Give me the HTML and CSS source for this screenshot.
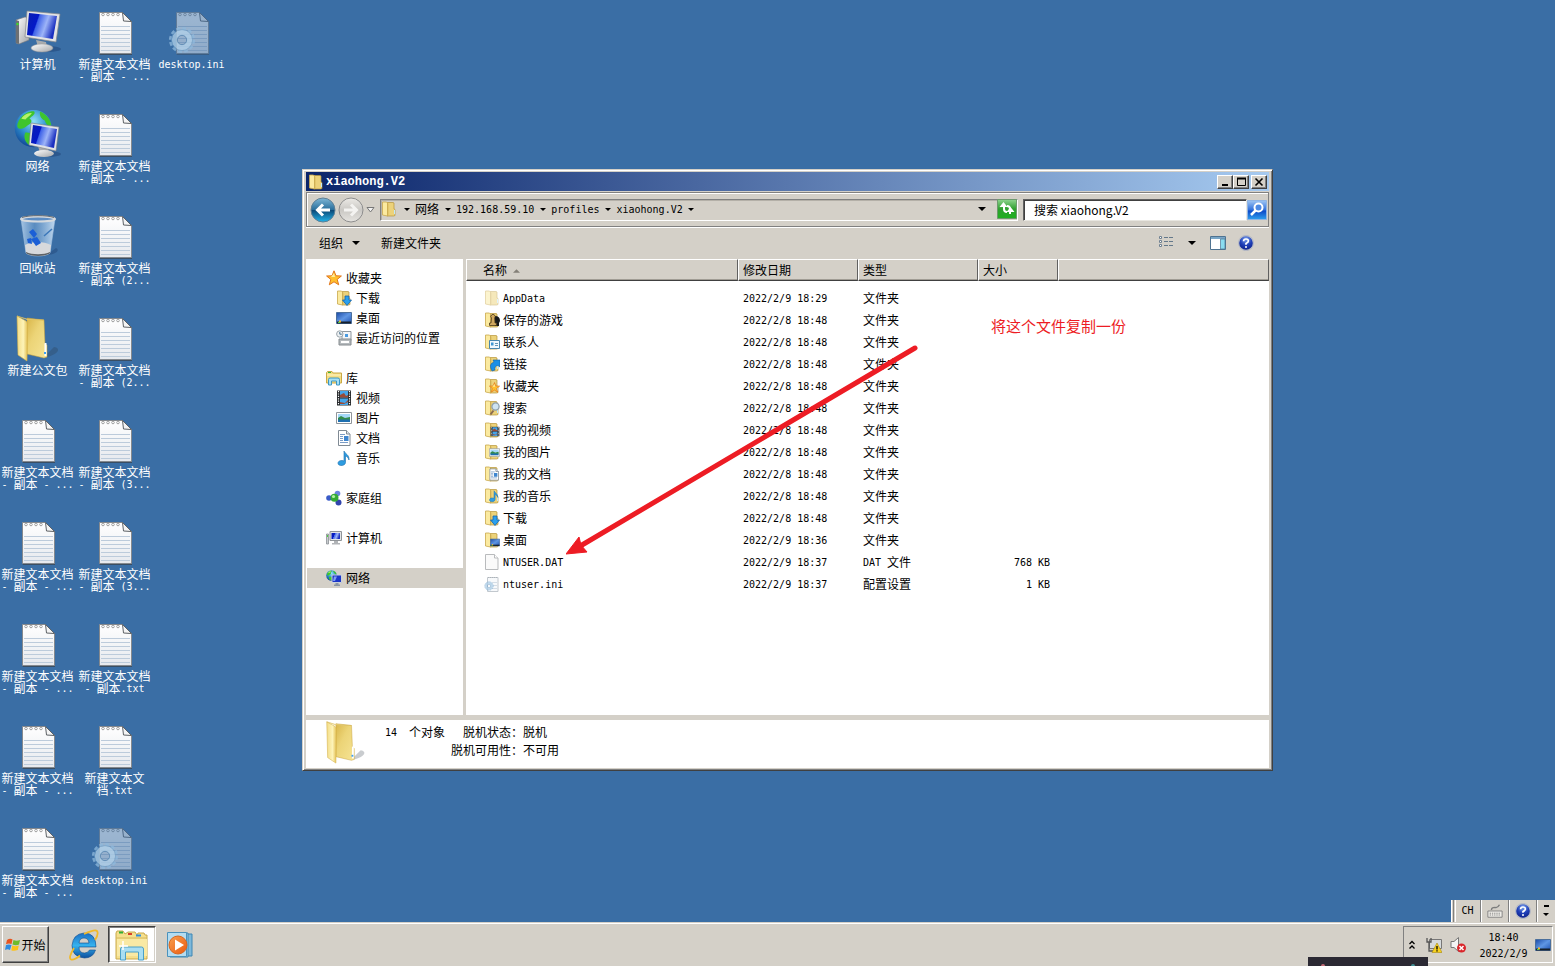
FILE: index.html
```
<!DOCTYPE html>
<html lang="zh-CN">
<head>
<meta charset="utf-8">
<title>xiaohong.V2</title>
<link rel="stylesheet" href="styles.css">
</head>
<body>
<svg class="defs" width="0" height="0" aria-hidden="true">
  <defs>
    <linearGradient id="gScreen" x1="0" y1="0" x2="1" y2="0.3"><stop offset="0" stop-color="#0a1fb0"/><stop offset=".38" stop-color="#0418c8"/><stop offset=".42" stop-color="#3f63e8"/><stop offset=".7" stop-color="#9db4f8"/><stop offset="1" stop-color="#1a2fc0"/></linearGradient>
    <linearGradient id="gMetal" x1="0" y1="0" x2="1" y2="1"><stop offset="0" stop-color="#ffffff"/><stop offset="1" stop-color="#a4a6a8"/></linearGradient>
    <linearGradient id="gPaper" x1="0" y1="0" x2="0" y2="1"><stop offset="0" stop-color="#ffffff"/><stop offset="1" stop-color="#e6e9ee"/></linearGradient>
    <linearGradient id="gFold" x1="0" y1="0" x2="1" y2="0"><stop offset="0" stop-color="#f3dc86"/><stop offset=".6" stop-color="#fdf3b8"/><stop offset="1" stop-color="#e4c154"/></linearGradient>
    <linearGradient id="gFoldBack" x1="0" y1="0" x2="1" y2="1"><stop offset="0" stop-color="#d9b64a"/><stop offset=".4" stop-color="#ecd477"/><stop offset="1" stop-color="#f6e495"/></linearGradient>
    <radialGradient id="gGlobe" cx=".5" cy=".3" r=".75"><stop offset="0" stop-color="#8fe0f5"/><stop offset=".5" stop-color="#2f8fd0"/><stop offset="1" stop-color="#0b3c8c"/></radialGradient>
    <linearGradient id="gBin" x1="0" y1="0" x2="1" y2="0"><stop offset="0" stop-color="#b9d4ee" stop-opacity=".85"/><stop offset=".4" stop-color="#6fa0d2" stop-opacity=".6"/><stop offset="1" stop-color="#cfe4f7" stop-opacity=".9"/></linearGradient>
    <linearGradient id="gBack" x1="0" y1="0" x2="0" y2="1"><stop offset="0" stop-color="#7fb7d6"/><stop offset=".48" stop-color="#2a6f9c"/><stop offset=".52" stop-color="#0c4a78"/><stop offset="1" stop-color="#22b4ea"/></linearGradient>
    <linearGradient id="gFwd" x1="0" y1="0" x2="0" y2="1"><stop offset="0" stop-color="#eceae6"/><stop offset=".5" stop-color="#cac8c4"/><stop offset="1" stop-color="#e6e4e0"/></linearGradient>
    <linearGradient id="gGreen" x1="0" y1="0" x2="0" y2="1"><stop offset="0" stop-color="#8fd48f"/><stop offset=".5" stop-color="#2fa02f"/><stop offset="1" stop-color="#1fb01f"/></linearGradient>
    <linearGradient id="gFind" x1="0" y1="0" x2="0" y2="1"><stop offset="0" stop-color="#9fc6f4"/><stop offset=".5" stop-color="#2f6fdc"/><stop offset=".55" stop-color="#0d49c8"/><stop offset="1" stop-color="#2fa0ee"/></linearGradient>
    <radialGradient id="gHelp" cx=".5" cy=".25" r=".8"><stop offset="0" stop-color="#7fa4ee"/><stop offset=".5" stop-color="#1f3fb8"/><stop offset="1" stop-color="#0a1a80"/></radialGradient>
    <linearGradient id="gDesk" x1="0" y1="0" x2="1" y2="1"><stop offset="0" stop-color="#1b4aa6"/><stop offset=".5" stop-color="#5f96e4"/><stop offset="1" stop-color="#1d50b0"/></linearGradient>
    <linearGradient id="gIe" x1="0" y1="0" x2="0" y2="1"><stop offset="0" stop-color="#1c6fc4"/><stop offset=".5" stop-color="#35b2ee"/><stop offset="1" stop-color="#0d4f9e"/></linearGradient>
    <linearGradient id="gOrange" x1="0" y1="0" x2="1" y2="1"><stop offset="0" stop-color="#f8a050"/><stop offset="1" stop-color="#ea5a10"/></linearGradient>

    <symbol id="computer" viewBox="0 0 48 48">
      <ellipse cx="34" cy="41" rx="13" ry="3" fill="#1d3f70" opacity=".45"/>
      <path d="M2 12l9-3 4 1v22l-10 4-3-1z" fill="url(#gMetal)" stroke="#77797c" stroke-width=".6"/><path d="M2 12l3 1v23l-3-1z" fill="#6d7073"/><circle cx="3.5" cy="16" r="1.2" fill="#3be02a"/>
      <path d="M22 32l10 2 1 5h-9z" fill="#a9abad"/><ellipse cx="28" cy="40" rx="11" ry="4" fill="url(#gMetal)" stroke="#999" stroke-width=".5"/>
      <path d="M13 3l33 3-4 28-31-5z" fill="#e3e4e5" stroke="#85878a" stroke-width=".7"/><path d="M15 5l28 3-4 23-26-4z" fill="url(#gScreen)"/>
    </symbol>
    <symbol id="globe" viewBox="0 0 48 48">
      <circle cx="24" cy="24" r="23" fill="url(#gGlobe)"/>
      <path d="M6 14C12 4 22 2 25 3c2 4-4 6-6 9 4 1 3 6-2 8-4 3-6 5-11 4-3-2-2-6 0-10zM14 29c6-1 10 3 13 6 0 5-3 9-7 10-6-3-9-10-6-16zM32 3c8 3 13 10 14 17-4 2-7-2-8-6-4-1-7-6-6-11z" fill="#3fc52d"/>
      <path d="M9 12c4-6 9-7 13-7-2 4-6 5-8 8z" fill="#b8f26a"/>
    </symbol>
    <symbol id="network" viewBox="0 0 48 48">
      <ellipse cx="34" cy="44" rx="13" ry="3" fill="#1d3f70" opacity=".45"/>
      <use href="#globe" x="0" y="-1" width="39" height="39"/>
      <path d="M24 36l10 2 1 5h-9z" fill="#a9abad"/><ellipse cx="30" cy="43.500" rx="10" ry="3.500" fill="url(#gMetal)"/>
      <path d="M17 13l28 4-3 24-27-6z" fill="#dfe2e6" stroke="#777b80" stroke-width=".6"/><path d="M19 15l24 4-3 19-23-5z" fill="url(#gScreen)"/>
    </symbol>
    <symbol id="bin" viewBox="0 0 48 48">
      <path d="M34 42l8-6c4 2 1 6-8 7z" fill="#1d3f70" opacity=".4"/>
      <path d="M7 7l5 34c4 4 20 4 24 0l5-34z" fill="url(#gBin)" stroke="#9fc0df" stroke-width=".6"/>
      <path d="M11 33c6-4 19-4 26 0l-1 8c-4 4-20 4-24 0z" fill="#d7d9dc"/><path d="M12 40c6 3 18 3 24 0v1c-4 4-20 4-24 0z" fill="#5d6267"/>
      <path d="M15 20l4-3 4 5-3 4zM17 27l6-2 4 6-5 3zM13 27l4-1 1 6-4-1z" fill="#1b5fd6"/><path d="M30 24l8-7" stroke="#3b77ba" stroke-width="1.500"/>
      <ellipse cx="24" cy="7" rx="17" ry="2.500" fill="#5c8dc4" stroke="#d5d9dd" stroke-width="2"/><path d="M8 5.500c7-2.500 25-2.500 32 0" fill="none" stroke="#6a6e72"/>
    </symbol>
    <symbol id="folder" viewBox="0 0 48 48">
      <path d="M32 41l8-8c7 1 5 7-7 10z" fill="#28323f" opacity=".25"/>
      <path d="M13 4l17 2 1 24 2 1v12l-3 1-17-4z" fill="url(#gFoldBack)" stroke="#c59f38" stroke-width=".5"/>
      <path d="M3 2l9 5c1 1 1.500 2 1.500 4L13 47 4 41z" fill="url(#gFold)" stroke="#d3b14a" stroke-width=".6"/>
      <path d="M3 2l10 3 17 1-17-.5z" fill="#fff6c8" stroke="#d9bb5a" stroke-width=".5"/><path d="M30.500 29h2v13h-2z" fill="#fff"/><path d="M30 38h2v2h-2z" fill="#3aa0f5"/>
    </symbol>
    <symbol id="note" viewBox="0 0 48 48">
      <path d="M8 45h33v2H9z" fill="#3a4654" opacity=".8"/><path d="M8.500 4.500h23l9 9V45.500h-32z" fill="url(#gPaper)" stroke="#85898e"/>
      <path d="M10 18.500h29M10 22.500h29M10 26.500h29M10 30.500h29M10 34.500h29M10 38.500h29M10 42.500h29" stroke="#bccbdb" stroke-width="1"/>
      <g fill="#fff" stroke="#8b8b8b" stroke-width=".8"><circle cx="12" cy="6.500" r="1.300"/><circle cx="17" cy="6.500" r="1.300"/><circle cx="22" cy="6.500" r="1.300"/><circle cx="27" cy="6.500" r="1.300"/></g>
      <path d="M31.500 4.500l1 8.500 8 .5z" fill="#f4f4f4" stroke="#5e6266"/>
    </symbol>
    <symbol id="gear" viewBox="0 0 30 30">
      <circle cx="15" cy="15" r="12.500" fill="none" stroke="#8fb9dc" stroke-width="3" stroke-dasharray="4 2.540"/><circle cx="15" cy="15" r="8" fill="none" stroke="#b2d2ea" stroke-width="6"/><circle cx="15" cy="15" r="11.300" fill="none" stroke="#6f9fc8" stroke-width=".7"/><circle cx="15" cy="15" r="5" fill="none" stroke="#4c7fac"/>
    </symbol>
    <symbol id="ini" viewBox="0 0 48 48"><use href="#note" width="48" height="48" opacity=".5"/><use href="#gear" x="0" y="17" width="28" height="30" opacity=".75"/></symbol>

    <symbol id="f16" viewBox="0 0 16 16"><path d="M6 1.500h6l1 .5v6l1 .5v6l-1.500 .5H6z" fill="#ecd27a" stroke="#b8953a" stroke-width=".7"/><path d="M6.500 2.500v12" stroke="#c9a545" stroke-width="1.500"/><path d="M1.500 1h4l1 1v13l-5-1z" fill="#fbeaa0" stroke="#c9a84c" stroke-width=".8"/><path d="M13 9h1v4h-1z" fill="#bfe8fa"/></symbol>
    <symbol id="dl" viewBox="0 0 16 16"><path d="M9 6h4v4h2.500L11 15.500 6.500 10H9z" fill="#2aa0ee" stroke="#1763a8" stroke-width=".8"/></symbol>
    <symbol id="star" viewBox="0 0 16 16"><path d="M8 .8l2 5 5.400.2-4.200 3.400 1.500 5.400L8 11.800l-4.700 3 1.500-5.400L.6 6 6 5.800z" fill="#ffc02e" stroke="#e2761b" stroke-width="1"/><path d="M8 3l1 4-4 0z" fill="#ffeb9a"/></symbol>
    <symbol id="desk" viewBox="0 0 16 16"><path d="M.5 2.500h15v11H.5z" fill="url(#gDesk)" stroke="#4b6f9c"/><path d="M1 11.500h14v2H1z" fill="#17202c"/><path d="M3 10.500h2v2H3z" fill="#f7b52b"/><path d="M2 12h2v1H2z" fill="#4fd04a"/></symbol>
    <symbol id="recent" viewBox="0 0 16 16"><path d="M6 1.500h9v9H6z" fill="#f3f6f8" stroke="#8e979e"/><path d="M9 4h3v3H9z" fill="#4b9be0"/><circle cx="3.800" cy="4" r="3.200" fill="#eef2f4" stroke="#9aa3a9"/><path d="M3.800 2v2.200h2" fill="none" stroke="#49708a"/><path d="M3 9h12v6H3z" fill="#b5babd" stroke="#868c90"/><path d="M5 12h8" stroke="#fff" stroke-width="2"/></symbol>
    <symbol id="lib" viewBox="0 0 16 16"><path d="M.5 2.500l1-1H6l1 1.500h8.500v10H.5z" fill="#f4dd83" stroke="#c9a846"/><path d="M2 2.500h3" stroke="#36b53a"/><path d="M1 5h14" stroke="#fff6c6"/><path d="M2.500 15V9.500q0-1.500 1.500-1.500h8q1.500 0 1.500 1.500V15h-3v-4h-5v4z" fill="#a6e0f5" stroke="#3c96c4"/></symbol>
    <symbol id="film" viewBox="0 0 16 16"><path d="M1 .5h14v15H1z" fill="#25282b"/><path d="M4 1h8v6.500H4zM4 8.500h8V15H4z" fill="#45a5ea"/><path d="M4 5l4-2 2 3 2-1v2.500H4zM4 12l5 1 3-3v2l-4 2H4z" fill="#9b4a35"/><path d="M2.500 1v14M13.500 1v14" stroke="#fff" stroke-width="1.200" stroke-dasharray="1.200 1.200"/></symbol>
    <symbol id="pic" viewBox="0 0 16 16"><path d="M.5 2.500h15v11H.5z" fill="#fff" stroke="#8f959a"/><path d="M2 4h12v4H2z" fill="#a5d8f8"/><path d="M2 8l3-2 4 2 5-1v3H2z" fill="#338b4b"/><path d="M2 9.500h12V12H2z" fill="#1e6fb0"/></symbol>
    <symbol id="doc" viewBox="0 0 16 16"><path d="M2.500.5h8l3.500 3.500v11.500H2.500z" fill="#fff" stroke="#808a94"/><path d="M10.500.5V4H14" fill="#e2e8ee" stroke="#808a94"/><path d="M4 4.500h5M4 6.500h3M4 8.500h3M4 10.500h3M4 12.500h8" stroke="#7a9cc6"/><path d="M8 6h4.500v5H8z" fill="#3f86cf"/></symbol>
    <symbol id="music" viewBox="0 0 16 16"><path d="M8 1c1 3 5.500 3.500 5 9-.8-2.500-2-3.500-3.500-4v6.500c0 3.800-7.500 4-7.500.8 0-2.700 3.500-3.300 6-2.300z" fill="#2e9ce0" stroke="#1d6fae" stroke-width=".6"/></symbol>
    <symbol id="home" viewBox="0 0 16 16"><path d="M3 8h7l1-5m-1 5l2 5" stroke="#9badc4" stroke-width="2" fill="none"/><circle cx="3" cy="8" r="2.800" fill="#3a5bc8"/><circle cx="11.500" cy="3.500" r="2.800" fill="#6c84e0"/><circle cx="12.500" cy="12.500" r="3" fill="#3144ad"/><circle cx="8.500" cy="7.800" r="4" fill="#35ab35"/><circle cx="7.500" cy="6.500" r="1.600" fill="#b5f2a4"/></symbol>
    <symbol id="pc" viewBox="0 0 16 16"><path d="M.5 4h2v10h-2z" fill="#c8cccf" stroke="#8c9195" stroke-width=".8"/><path d="M1 5h1v2H1z" fill="#4cd13d"/><path d="M4 1.500h11.500v9H4z" fill="#e2e4e6" stroke="#909498"/><path d="M5.500 3H14v6H5.500z" fill="url(#gScreen)"/><path d="M8 11h4v2h2v1.500H6V13h2z" fill="#b1b4b7"/></symbol>
    <symbol id="net" viewBox="0 0 16 16"><use href="#globe" width="11" height="11"/><path d="M6 5h9.500v7.500H6z" fill="#1b35c8" stroke="#c9d1da"/><path d="M8 6.500h3L9 11H7z" fill="#7f9cf5"/><path d="M9.500 13h3v1.500h1.500V16H8v-1.500h1.500z" fill="#8b97a5"/></symbol>
    <symbol id="page" viewBox="0 0 16 16"><path d="M1.500.5h9l3.500 3.500v11.500H1.500z" fill="#fafafa" stroke="#b9bbbd"/><path d="M10.500.5V4H14" fill="#fff" stroke="#b9bbbd"/></symbol>
    <symbol id="ini16" viewBox="0 0 16 16"><path d="M3.500 1.500H14v14H3.500z" fill="#f7f9fb" stroke="#c2c8ce"/><path d="M4 1.500h10" stroke="#adb3b8" stroke-dasharray="1 1"/><path d="M8 6.500h5M9 9.500h4M8 12.500h5" stroke="#d4dde6"/><use href="#gear" x="0" y="5" width="10" height="10" opacity=".8"/></symbol>
    <symbol id="chess" viewBox="0 0 16 16"><path d="M11 4q5 0 5 5l-1 2v3h-4z" fill="#16181a"/><path d="M7.500 3a2 2 0 1 1 3 3l.5 5h1.500v2.500h-7V11H7l.5-5a2 2 0 0 1 0-3z" fill="#d0a860" stroke="#4c3a1a" stroke-width=".8"/></symbol>
    <symbol id="card" viewBox="0 0 16 16"><path d="M5.500 6.500h10v8h-10z" fill="#f2f9fd" stroke="#4a87ad"/><path d="M7 8.500h2.500v3H7z" fill="#3f97d2"/><path d="M11 9.500h3M11 11.500h3" stroke="#6597b5"/></symbol>
    <symbol id="link" viewBox="0 0 16 16"><path d="M8 15q-4-7 2-9l-1-2h7v7l-2-1.500q-4 .5-3 4.500z" fill="#1b8fe6" stroke="#1262a6" stroke-width=".6"/></symbol>
    <symbol id="lens" viewBox="0 0 16 16"><path d="M6.500 14.500l3-4" stroke="#8a6c50" stroke-width="2"/><circle cx="11.500" cy="6.500" r="3.600" fill="#cfe4f2" stroke="#8ea0ae" stroke-width="1.300"/></symbol>
    <symbol id="help" viewBox="0 0 16 16"><circle cx="8" cy="8" r="7.400" fill="url(#gHelp)" stroke="#b8bcc6" stroke-width="1.200"/><path d="M5.600 6.200Q5.600 4 8 4t2.400 2.100Q10.400 7.500 8 8.500V9.800" fill="none" stroke="#fff" stroke-width="1.700"/><circle cx="8" cy="12" r="1" fill="#fff"/></symbol>
    <symbol id="tri" viewBox="0 0 8 4"><path d="M0 0h8L4 4z" fill="#000"/></symbol>
  </defs>
</svg>

<main class="desktop">
  <ul class="icons">
    <li><svg><use href="#computer"/></svg><span>计算机</span></li>
    <li><svg><use href="#network"/></svg><span>网络</span></li>
    <li><svg><use href="#bin"/></svg><span>回收站</span></li>
    <li><svg><use href="#folder"/></svg><span>新建公文包</span></li>
    <li><svg><use href="#note"/></svg><span>新建文本文档<br><i>- </i>副本<i> - ...</i></span></li>
    <li><svg><use href="#note"/></svg><span>新建文本文档<br><i>- </i>副本<i> - ...</i></span></li>
    <li><svg><use href="#note"/></svg><span>新建文本文档<br><i>- </i>副本<i> - ...</i></span></li>
    <li><svg><use href="#note"/></svg><span>新建文本文档<br><i>- </i>副本<i> - ...</i></span></li>
    <li><svg><use href="#note"/></svg><span>新建文本文档<br><i>- </i>副本<i> - ...</i></span></li>
    <li><svg><use href="#note"/></svg><span>新建文本文档<br><i>- </i>副本<i> - ...</i></span></li>
    <li><svg><use href="#note"/></svg><span>新建文本文档<br><i>- </i>副本<i> - ...</i></span></li>
    <li><svg><use href="#note"/></svg><span>新建文本文档<br><i>- </i>副本<i> (2...</i></span></li>
    <li><svg><use href="#note"/></svg><span>新建文本文档<br><i>- </i>副本<i> (2...</i></span></li>
    <li><svg><use href="#note"/></svg><span>新建文本文档<br><i>- </i>副本<i> (3...</i></span></li>
    <li><svg><use href="#note"/></svg><span>新建文本文档<br><i>- </i>副本<i> (3...</i></span></li>
    <li><svg><use href="#note"/></svg><span>新建文本文档<br><i>- </i>副本<i>.txt</i></span></li>
    <li><svg><use href="#note"/></svg><span>新建文本文<br>档<i>.txt</i></span></li>
    <li><svg><use href="#ini"/></svg><span><i>desktop.ini</i></span></li>
    <li><svg><use href="#ini"/></svg><span><i>desktop.ini</i></span></li>
  </ul>

  <section class="window" aria-label="xiaohong.V2">
    <header class="titlebar">
      <svg class="ic"><use href="#f16"/></svg>
      <h1>xiaohong.V2</h1>
      <div class="winbtns">
        <button aria-label="最小化"><svg viewBox="0 0 12 10"><path d="M3 8h6" stroke="#000" stroke-width="2"/></svg></button>
        <button aria-label="最大化"><svg viewBox="0 0 12 10"><path d="M2.500 1.500h8v7h-8z" fill="none" stroke="#000"/><path d="M2 1.500h9" stroke="#000" stroke-width="2"/></svg></button>
        <button aria-label="关闭" class="close"><svg viewBox="0 0 12 10"><path d="M2.500 1.500l7 7m0-7l-7 7" stroke="#000" stroke-width="1.600"/></svg></button>
      </div>
    </header>

    <nav class="navbar">
      <div class="travel">
        <button aria-label="后退"><svg viewBox="0 0 26 26"><circle cx="13" cy="13" r="12" fill="url(#gBack)" stroke="#5f7f94"/><path d="M20 13H8m5-5.500L7.500 13l5.500 5.500" fill="none" stroke="#fff" stroke-width="3"/></svg></button>
        <button aria-label="前进"><svg viewBox="0 0 26 26"><circle cx="13" cy="13" r="12" fill="url(#gFwd)" stroke="#8e8e8e"/><path d="M6 13h12m-5-5.500l5.500 5.500-5.500 5.500" fill="none" stroke="#f4f3f1" stroke-width="3"/></svg></button>
        <button class="recentbtn" aria-label="最近的页面"><svg viewBox="0 0 9 6"><path d="M1 .5h7L4.500 5z" fill="#f2f2f2" stroke="#777"/></svg></button>
      </div>
      <div class="address">
        <svg class="ic"><use href="#f16"/></svg>
        <span class="sep first"><svg><use href="#tri"/></svg></span>
        <a href="#">网络</a><span class="sep"><svg><use href="#tri"/></svg></span>
        <a href="#"><i>192.168.59.10</i></a><span class="sep"><svg><use href="#tri"/></svg></span>
        <a href="#"><i>profiles</i></a><span class="sep"><svg><use href="#tri"/></svg></span>
        <a href="#"><i>xiaohong.V2</i></a><span class="sep"><svg><use href="#tri"/></svg></span>
        <button class="drop" aria-label="以前的位置"><svg class="tri"><use href="#tri"/></svg></button>
        <button class="refresh" aria-label="刷新"><svg viewBox="0 0 20 20"><path d="M.5.500h19v19H.5z" fill="url(#gGreen)" stroke="#6d9a6d"/><path d="M7 5v5q0 3 3 3M13 15v-5q0-3-3-3" fill="none" stroke="#fff" stroke-width="2"/><path d="M2.500 8L6.500 3l4 5zM9.500 13l4-5 4 5z" fill="#fff"/></svg></button>
      </div>
      <form class="search">
        <input type="text" aria-label="搜索" value="搜索 xiaohong.V2">
        <button type="button" aria-label="开始搜索"><svg viewBox="0 0 20 20"><path d="M.5.500h19v19H.5z" fill="url(#gFind)" stroke="#8fb4e4"/><circle cx="11.500" cy="7.500" r="4" fill="#4d8ae4" stroke="#fff" stroke-width="2"/><path d="M8.500 10.500L4 15" stroke="#fff" stroke-width="2.500"/></svg></button>
      </form>
    </nav>

    <div class="toolbar">
      <button>组织<svg class="tri"><use href="#tri"/></svg></button>
      <button>新建文件夹</button>
      <div class="tools">
        <button aria-label="更改视图"><svg class="ic" viewBox="0 0 16 16"><path d="M1.500 1.500h2v2h-2zM1.500 5.500h2v2h-2zM1.500 9.500h2v2h-2z" fill="#fff" stroke="#6f8090"/><path d="M6 2.500h4M11 2.500h4M6 6.500h4M11 6.500h4M6 10.500h4M11 10.500h4" stroke="#64788a"/></svg></button>
        <button class="more" aria-label="更多选项"><svg class="tri"><use href="#tri"/></svg></button>
        <button aria-label="预览窗格"><svg class="ic" viewBox="0 0 16 16"><path d="M.5 1.500h15v13H.5z" fill="#fff" stroke="#4f7391"/><path d="M1 3h14" stroke="#4d88b4" stroke-width="1.500"/><path d="M10.500 4h4.500v10h-4.500z" fill="#8adcf0" stroke="#4f7391" stroke-width=".7"/></svg></button>
        <button aria-label="帮助"><svg class="ic"><use href="#help"/></svg></button>
      </div>
    </div>

    <div class="body">
      <aside class="tree">
        <div><a href="#"><svg class="ic"><use href="#star"/></svg>收藏夹</a>
          <a class="sub" href="#"><svg class="ic"><use href="#f16"/><use href="#dl"/></svg>下载</a>
          <a class="sub" href="#"><svg class="ic"><use href="#desk"/></svg>桌面</a>
          <a class="sub" href="#"><svg class="ic"><use href="#recent"/></svg>最近访问的位置</a></div>
        <div><a href="#"><svg class="ic"><use href="#lib"/></svg>库</a>
          <a class="sub" href="#"><svg class="ic"><use href="#film"/></svg>视频</a>
          <a class="sub" href="#"><svg class="ic"><use href="#pic"/></svg>图片</a>
          <a class="sub" href="#"><svg class="ic"><use href="#doc"/></svg>文档</a>
          <a class="sub" href="#"><svg class="ic"><use href="#music"/></svg>音乐</a></div>
        <div><a href="#"><svg class="ic"><use href="#home"/></svg>家庭组</a></div>
        <div><a href="#"><svg class="ic"><use href="#pc"/></svg>计算机</a></div>
        <div><a class="selected" href="#"><svg class="ic"><use href="#net"/></svg>网络</a></div>
      </aside>
      <div class="list">
        <table>
          <colgroup><col class="c-name"><col class="c-date"><col class="c-type"><col class="c-size"><col></colgroup>
          <thead><tr><th>名称<svg class="sort" viewBox="0 0 8 4"><path d="M0 4h8L4 0z" fill="#848078"/></svg></th><th>修改日期</th><th>类型</th><th>大小</th><th></th></tr></thead>
          <tbody>
            <tr><td><svg class="ic faded"><use href="#f16"/></svg><i>AppData</i></td><td><i>2022/2/9 18:29</i></td><td>文件夹</td><td></td><td></td></tr>
            <tr><td><svg class="ic"><use href="#f16"/><use href="#chess"/></svg>保存的游戏</td><td><i>2022/2/8 18:48</i></td><td>文件夹</td><td></td><td></td></tr>
            <tr><td><svg class="ic"><use href="#f16"/><use href="#card"/></svg>联系人</td><td><i>2022/2/8 18:48</i></td><td>文件夹</td><td></td><td></td></tr>
            <tr><td><svg class="ic"><use href="#f16"/><use href="#link"/></svg>链接</td><td><i>2022/2/8 18:48</i></td><td>文件夹</td><td></td><td></td></tr>
            <tr><td><svg class="ic"><use href="#f16"/><use href="#star" x="5" y="4" width="11" height="11"/></svg>收藏夹</td><td><i>2022/2/8 18:48</i></td><td>文件夹</td><td></td><td></td></tr>
            <tr><td><svg class="ic"><use href="#f16"/><use href="#lens"/></svg>搜索</td><td><i>2022/2/8 18:48</i></td><td>文件夹</td><td></td><td></td></tr>
            <tr><td><svg class="ic"><use href="#f16"/><use href="#film" x="6" y="4" width="10" height="11"/></svg>我的视频</td><td><i>2022/2/8 18:48</i></td><td>文件夹</td><td></td><td></td></tr>
            <tr><td><svg class="ic"><use href="#f16"/><use href="#pic" x="5" y="3" width="11" height="11"/></svg>我的图片</td><td><i>2022/2/8 18:48</i></td><td>文件夹</td><td></td><td></td></tr>
            <tr><td><svg class="ic"><use href="#f16"/><use href="#doc" x="4" y="2" width="12" height="13"/></svg>我的文档</td><td><i>2022/2/8 18:48</i></td><td>文件夹</td><td></td><td></td></tr>
            <tr><td><svg class="ic"><use href="#f16"/><use href="#music" x="4" y="1" width="12" height="14"/></svg>我的音乐</td><td><i>2022/2/8 18:48</i></td><td>文件夹</td><td></td><td></td></tr>
            <tr><td><svg class="ic"><use href="#f16"/><use href="#dl"/></svg>下载</td><td><i>2022/2/8 18:48</i></td><td>文件夹</td><td></td><td></td></tr>
            <tr><td><svg class="ic"><use href="#f16"/><use href="#desk" x="6" y="5" width="10" height="11"/></svg>桌面</td><td><i>2022/2/9 18:36</i></td><td>文件夹</td><td></td><td></td></tr>
            <tr><td><svg class="ic"><use href="#page"/></svg><i>NTUSER.DAT</i></td><td><i>2022/2/9 18:37</i></td><td><i>DAT </i>文件</td><td><i>768 KB</i></td><td></td></tr>
            <tr><td><svg class="ic"><use href="#ini16"/></svg><i>ntuser.ini</i></td><td><i>2022/2/9 18:37</i></td><td>配置设置</td><td><i>1 KB</i></td><td></td></tr>
          </tbody>
        </table>
      </div>
    </div>

    <footer class="details">
      <svg class="big"><use href="#folder"/></svg>
      <p><i>14  </i>个对象</p>
      <dl><dt>脱机状态：</dt><dd>脱机</dd><dt>脱机可用性：</dt><dd>不可用</dd></dl>
    </footer>

    <p class="callout">将这个文件复制一份</p>
    <svg class="arrow" viewBox="0 0 352 210"><path d="M349 3L16 200" stroke="#ed1c24" stroke-width="5" stroke-linecap="round"/><path d="M0 209l13-17 2 8 6 7z" fill="#ed1c24" stroke="#ed1c24"/></svg>
  </section>

  <div class="langbar">
    <button class="ch">CH</button>
    <button aria-label="键盘"><svg viewBox="0 0 18 16"><path d="M1 8h16v7H1z" fill="#f0eee9" stroke="#7c7c7c"/><path d="M3 10.500h12M3 12.500h12" stroke="#7c7c7c" stroke-dasharray="1.500 1"/><path d="M5 7q0-3 4-3 3 1 5-3" fill="none" stroke="#7c7c7c" stroke-width="1.500"/></svg></button>
    <button aria-label="帮助"><svg viewBox="0 0 16 16"><use href="#help"/></svg></button>
    <button class="opts" aria-label="选项"><svg viewBox="0 0 6 12"><path d="M1 1h5" stroke="#000" stroke-width="2"/><path d="M0 8h6l-3 3z"/></svg></button>
  </div>
</main>

<footer class="taskbar">
  <button class="start"><svg viewBox="0 0 16 16"><path d="M2 3q3-2 5.500-.5L6.500 7Q4 6 1 7z" fill="#e8541f"/><path d="M8.500 3q3 1.500 6.500 0l-1 4.500q-3 1.500-6.500 0z" fill="#6dbb2c"/><path d="M1 8q3-1 5.500 0L5 13q-2.500-1.500-5 0z" fill="#2f8be0"/><path d="M7.300 8.500q3 1.500 6.500 0l-1 4.500q-4 1.500-6.500.2z" fill="#fbc21a"/></svg>开始</button>
  <button class="app" aria-label="Internet Explorer"><svg viewBox="0 0 32 32"><path d="M29 18H12q0 6 5.500 6 3.500 0 5-3h6Q26 29 17.500 29 5 28 5 16.500 6 5 17 4q12 0 12 14zM12 14h10q-.5-5-5-5t-5 5z" fill="url(#gIe)" stroke="#0e4a8c" stroke-width=".6" fill-rule="evenodd"/><path d="M7 19q-6 10-3 11.500 3 1 9-4M17 5Q28 0 30 2q2 3-2 9" fill="none" stroke="#f1b929" stroke-width="1.800"/></svg></button>
  <button class="app active" aria-label="Windows 资源管理器"><svg viewBox="0 0 34 32"><path d="M1 4l1-2h6l2 3 3-2h7l2 3 1-2h6l1 2h2v24H1z" fill="#f5df8c" stroke="#c9a94d"/><path d="M1 9h31" stroke="#d5b95e"/><path d="M2 10h30v17H2z" fill="#f9e9a4"/><path d="M4 3.500h4" stroke="#2fae35" stroke-width="2"/><path d="M13 5h4" stroke="#d8402c" stroke-width="2"/><path d="M21 6.500h5" stroke="#2f8fe0" stroke-width="2"/><path d="M5.500 31V20q0-2 2-2h19q2 0 2 2v11h-5v-8h-13v8z" fill="#a9def2" stroke="#4ba0c8"/><path d="M8 12v9M4 17h9" stroke="#fff" stroke-width="1.500"/></svg></button>
  <button class="app" aria-label="Windows Media Player"><svg viewBox="0 0 32 32"><path d="M9 5h18v22H9z" fill="#7db8da" stroke="#3f87b4"/><path d="M5 4h18v24H5z" fill="#9bd0ea" stroke="#3f87b4"/><path d="M2.500 3.500h19v24h-19z" fill="#b4dcf0" stroke="#4a92bd"/><circle cx="13" cy="16" r="9" fill="url(#gOrange)" stroke="#d9651d"/><path d="M10 10.500l9 5.500-9 5.500z" fill="#fff"/></svg></button>
  <div class="peek"><svg viewBox="0 0 120 9"><circle cx="15" cy="9" r="2" fill="#c56a75"/><circle cx="105" cy="9" r="2" fill="#3f8f94"/></svg></div>
  <div class="tray">
    <button class="chev" aria-label="显示隐藏的图标"><svg viewBox="0 0 6 10"><path d="M.5 4L3 1.500 5.500 4M.5 8.500L3 6l2.500 2.500" fill="none" stroke="#000" stroke-width="1.300"/></svg></button>
    <button aria-label="网络"><svg viewBox="0 0 16 16"><path d="M3.500 2.500h12v9h-12z" fill="#d6dadd" stroke="#777"/><path d="M1 1v4h4V1M3 5v9h4" fill="none" stroke="#555" stroke-width="1.300"/><path d="M11 6l5 9.500H6z" fill="#f8d21e" stroke="#a88a10" stroke-width=".6"/><path d="M11 9v3.500m0 .8v1.200" stroke="#000" stroke-width="1.300"/></svg></button>
    <button aria-label="音量"><svg viewBox="0 0 16 16"><path d="M1 4.500h3L8.500.5v14L4 10.500H1z" fill="#f4f4f4" stroke="#777"/><circle cx="11.500" cy="11" r="4.500" fill="#d9252a"/><path d="M9.500 9l4 4m0-4l-4 4" stroke="#fff" stroke-width="1.500"/></svg></button>
    <time><i>18:40</i><i>2022/2/9</i></time>
    <button aria-label="显示桌面"><svg viewBox="0 0 16 16"><use href="#desk"/></svg></button>
  </div>
</footer>
</body>
</html>
```
FILE: styles.css
```
* { box-sizing: border-box; margin: 0; padding: 0; }

html, body { height: 100%; }

body {
  display: flex;
  flex-direction: column;
  overflow: hidden;
  background: #3a6ea5;
  color: #000;
  font: 12px/20px "Noto Sans CJK SC", sans-serif;
}

i { font: 10px/1 "DejaVu Sans Mono", monospace; vertical-align: 1px; white-space: pre; }
a { color: inherit; text-decoration: none; }
svg { display: block; flex: none; }
button { display: flex; align-items: center; justify-content: center; border: 0; background: none; color: inherit; font: inherit; }

.defs { position: absolute; }
.ic { width: 16px; height: 16px; }
.tri { width: 8px; height: 4px; }

/* Desktop */
.desktop { position: relative; flex: 1; min-height: 0; }

.icons {
  display: grid;
  grid-template-rows: repeat(9, 102px);
  grid-auto-flow: column;
  grid-auto-columns: 77px;
  justify-content: start;
  list-style: none;
}
.icons li { display: flex; flex-direction: column; align-items: center; gap: 3px; padding: 8px 2px 0 0; color: #fff; font-family: "Liberation Sans", "Noto Sans CJK SC", sans-serif; line-height: 12px; text-align: center; white-space: nowrap; }
.icons svg { width: 48px; height: 48px; }

/* Explorer window */
.window {
  position: absolute;
  inset: 169px 282px 151px 302px;
  display: flex;
  flex-direction: column;
  padding: 2px;
  background: #d4d0c8;
  border: 1px solid;
  border-color: #d4d0c8 #404040 #404040 #d4d0c8;
  box-shadow: inset 1px 1px #fff, inset -1px -1px #808080;
}

.titlebar { display: flex; align-items: center; height: 19px; padding: 0 2px; margin: 0 1px; background: linear-gradient(90deg, #0a246a, #a6caf0); color: #fff; }
.titlebar h1 { flex: 1; padding-left: 2px; font: bold 12px/18px "Liberation Mono", monospace; }
.winbtns { display: flex; }
.winbtns button { width: 16px; height: 14px; background: #d4d0c8; border: 1px solid; border-color: #fff #404040 #404040 #fff; box-shadow: inset -1px -1px #808080; }
.winbtns svg { width: 12px; height: 10px; }
.winbtns .close { margin-left: 2px; }

.navbar { display: flex; align-items: center; height: 35px; margin: 1px 1px 0; padding: 0 1px 0 3px; border: 1px solid #808080; box-shadow: inset 1px 1px #fff, 0 1px #fff; }
.travel { display: flex; align-items: center; width: 70px; gap: 2px; }
.travel svg { width: 26px; height: 26px; }
.travel .recentbtn svg { width: 9px; height: 6px; }
.address { display: flex; flex: 1; align-items: center; height: 22px; padding-bottom: 1px; border: 1px solid; border-color: #808080 #fff #fff #808080; box-shadow: inset 1px 1px #b4b0a8; line-height: 18px; }
.address a { padding-bottom: 1px; }
.sep { display: flex; justify-content: center; width: 17px; }
.sep.first { width: 18px; padding-left: 2px; }
.sep svg { width: 6px; height: 3px; }
.drop { width: 30px; height: 20px; margin-left: auto; }
.refresh svg { width: 20px; height: 20px; }
.search { display: flex; align-items: center; width: 244px; margin-left: 5px; }
.search input { flex: 1; min-width: 0; height: 22px; padding: 0 10px; border: 1px solid; border-color: #606060 #e8e6e0 #e8e6e0 #606060; box-shadow: inset 1px 1px #404040; background: #fff; color: #000; font: 12px/20px "Noto Sans CJK SC", sans-serif; }
.search svg { width: 20px; height: 20px; }

.toolbar { display: flex; align-items: center; height: 32px; padding: 0 16px 0 14px; gap: 21px; }
.toolbar button { gap: 9px; }
.tools { display: flex; align-items: center; margin-left: auto; }
.tools .more { width: 36px; }
.tools button:last-child { margin-left: 12px; }

.body { display: flex; flex: 1; gap: 3px; min-height: 0; margin: 0 1px; }
.tree { display: flex; flex-direction: column; flex: none; gap: 20px; width: 157px; padding: 9px 0 0 1px; background: #fff; }
.tree a { display: flex; align-items: center; gap: 4px; height: 20px; padding-left: 19px; }
.tree .sub { padding-left: 29px; }
.tree .selected { background: #d4d0c8; }

.list { flex: 1; min-width: 0; background: #fff; }
table { width: 100%; table-layout: fixed; border-collapse: separate; border-spacing: 0; }
.c-name { width: 272px; }
.c-date, .c-type { width: 120px; }
.c-size { width: 80px; }
th { height: 22px; padding: 0 4px; background: #d4d0c8; border: 1px solid; border-color: #fff #606060 #404040 #fff; box-shadow: inset 0 -1px #a09c94; font-weight: normal; line-height: 20px; text-align: left; }
th:first-child { padding-left: 16px; }
.sort { display: inline-block; width: 7px; height: 4px; margin-left: 6px; vertical-align: 2px; }
tbody::before { content: ""; display: table-row; height: 6px; }
td { height: 22px; padding-left: 5px; line-height: 22px; white-space: nowrap; }
td:first-child { padding-left: 18px; }
td .ic { display: inline-block; margin-right: 3px; vertical-align: -3px; }
td:nth-child(4) { padding-right: 8px; text-align: right; }
.faded { opacity: .5; }

.details { display: flex; height: 48px; margin: 5px 1px 0; padding-left: 18px; background: #fff; line-height: 18px; }
.big { width: 44px; height: 44px; }
.details p { margin: 3px 0 0 17px; }
.details dl { display: grid; grid-template-columns: 72px auto; align-content: start; padding-top: 3px; margin-left: 6px; }
.details dt { text-align: right; }

/* Annotation over the file list */
.callout { position: absolute; left: 688px; top: 145px; color: #ed1c24; font-size: 15px; line-height: 22px; }
.arrow { position: absolute; left: 263px; top: 175px; width: 352px; height: 210px; }

/* Language bar */
.langbar { position: absolute; right: 0; bottom: 0; display: flex; width: 104px; height: 22px; padding-left: 3px; background: #d4d0c8; border-left: 1px solid #fff; box-shadow: inset 1px 0 #d4d0c8, inset 2px 0 #808080; }
.langbar button { width: 28px; border-right: 1px solid #808080; box-shadow: inset -1px 0 #d4d0c8, inset 1px 0 #fff; }
.langbar svg { width: 16px; height: 16px; }
.langbar .ch { width: 26px; font: 10px/20px "DejaVu Sans Mono", monospace; }
.langbar .opts { flex: 1; border-right: 0; }
.langbar .opts svg { width: 6px; height: 12px; }

/* Taskbar */
.taskbar { position: relative; display: flex; flex: none; height: 44px; padding: 4px 2px 3px; background: #d4d0c8; box-shadow: inset 0 1px #d4d0c8, inset 0 2px #fff; }
.start { width: 47px; border: 1px solid; border-color: #fff #404040 #404040 #fff; box-shadow: inset -1px -1px #808080; }
.start svg { width: 16px; height: 16px; }
.app { width: 48px; margin-left: 1px; }
.app svg { width: 34px; height: 32px; }
.start + .app { margin-left: 10px; }
.app.active { background: #fff; border: 1px solid; border-color: #404040 #fff #fff #404040; box-shadow: inset 1px 1px #808080, inset -1px -1px #d4d0c8; }
.peek { position: absolute; right: 127px; bottom: 0; z-index: 1; width: 120px; height: 9px; background: #2b2933; }
.peek svg { width: 120px; height: 9px; }
.tray { display: flex; align-items: center; width: 150px; margin-left: auto; padding: 0 1px 0 5px; border: 1px solid; border-color: #808080 #fff #fff #808080; }
.tray svg { width: 16px; height: 16px; }
.tray .chev { width: 6px; margin-right: 11px; }
.tray .chev svg { width: 6px; height: 10px; }
.tray button + button { margin-right: 8px; }
.tray time { display: flex; flex: 1; flex-direction: column; align-items: center; gap: 6px; padding: 2px 2px 0 0; }
.tray time + button { margin: 0; }
```
